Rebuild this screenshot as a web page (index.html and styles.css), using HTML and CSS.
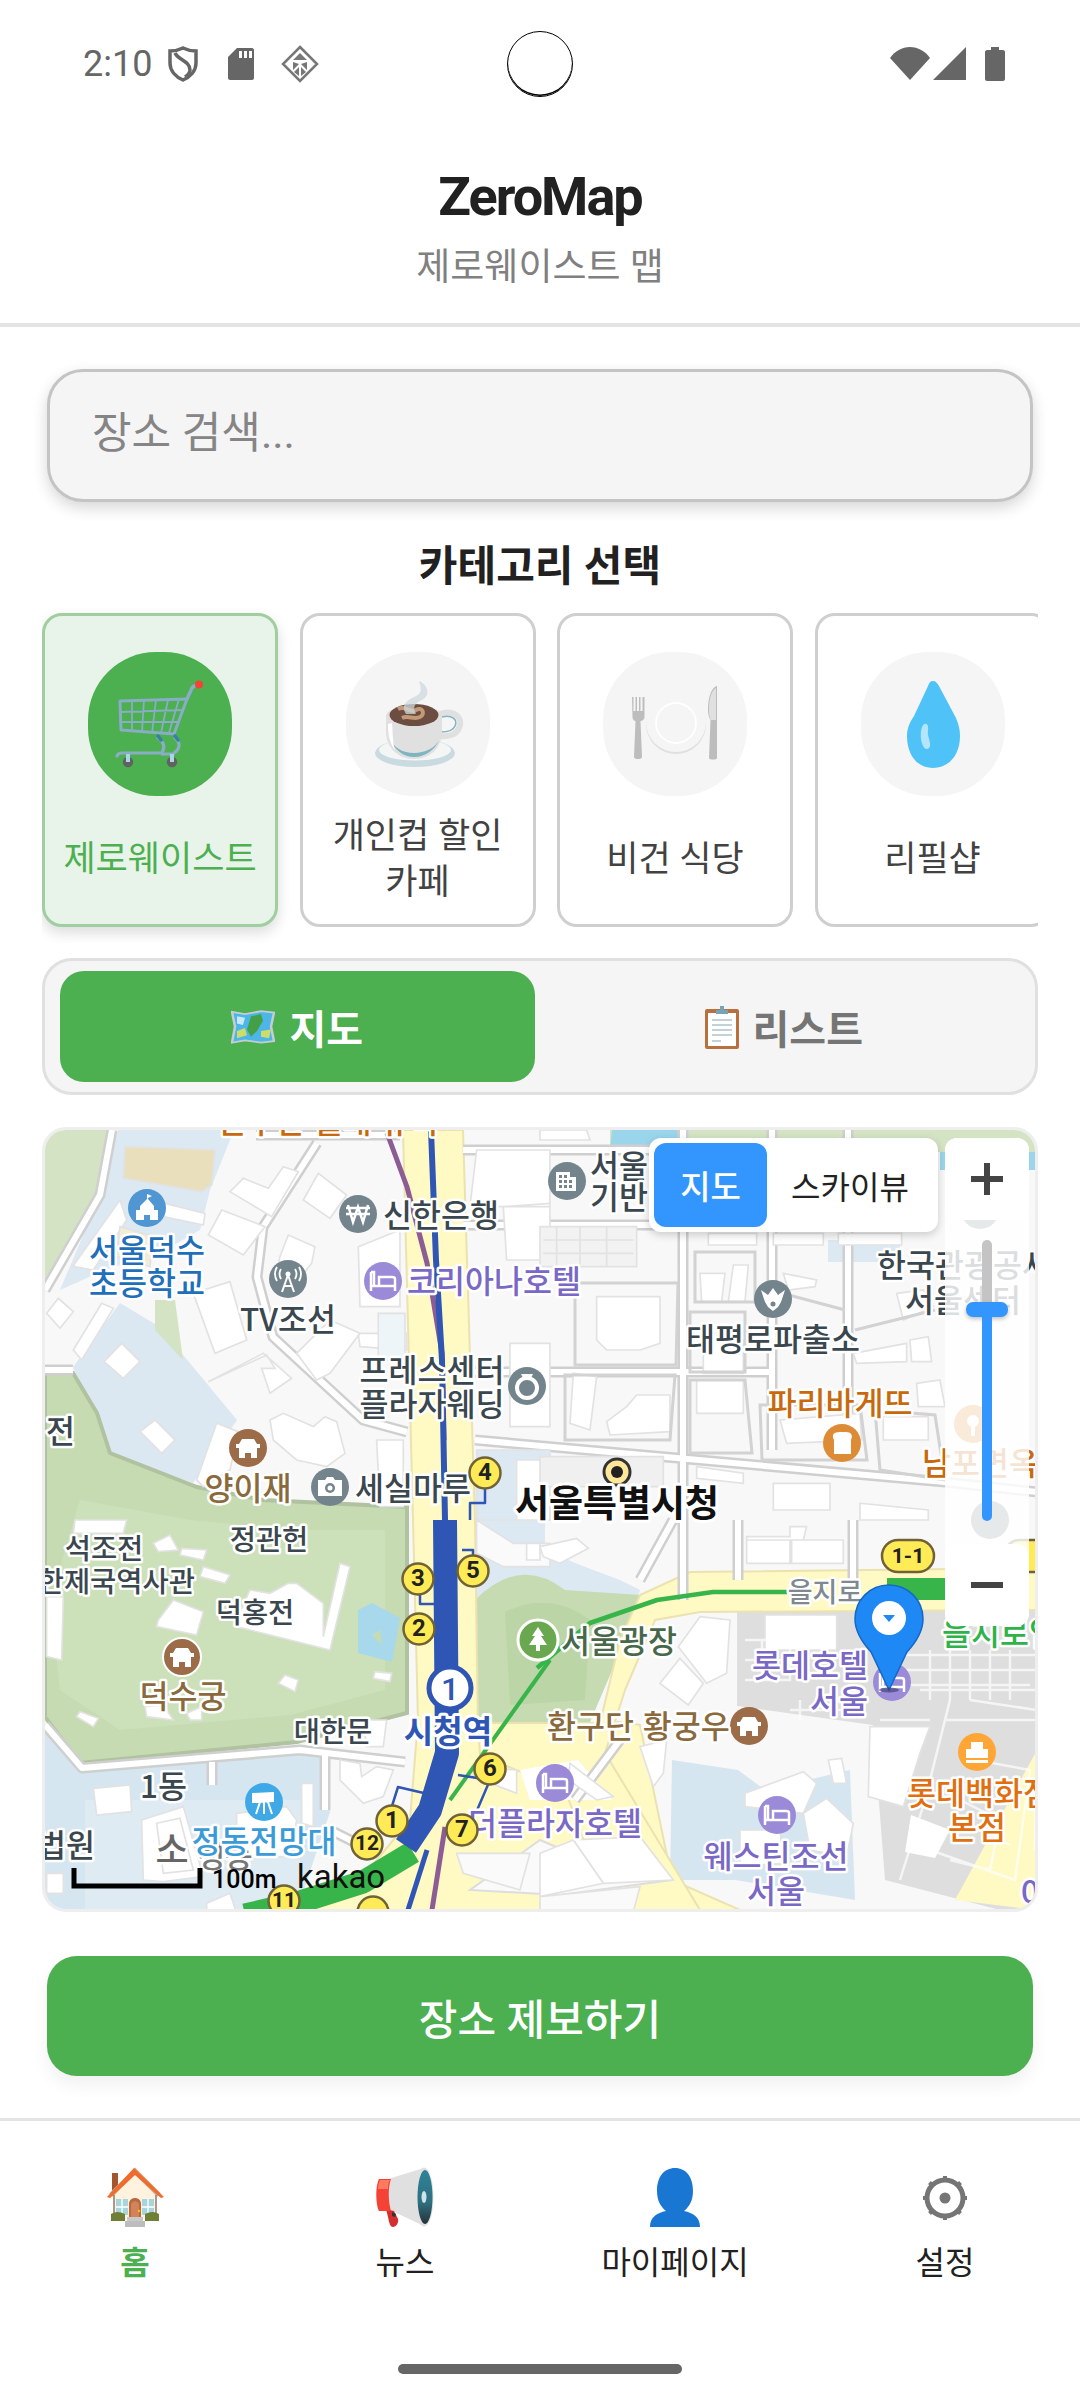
FILE: index.html
```html
<!DOCTYPE html>
<html lang="ko">
<head>
<meta charset="utf-8">
<title>ZeroMap</title>
<link rel="stylesheet" href="styles.css">
</head>
<body>
<div class="app">
  <div class="status">
    <div class="status-left">
      <span class="time">2:10</span>
      <svg class="st-shield" viewBox="0 0 30 36" width="30" height="36"><path d="M15 2C20 4.500 25 5 28 5V17C28 25 22 31 15 34C8 31 2 25 2 17V5C5 5 10 4.500 15 2Z" fill="none" stroke="#666" stroke-width="3.500"/><path d="M7 7C10 14 22 15 22 24C22 27 20 29 17 31" fill="none" stroke="#666" stroke-width="3.500"/></svg>
      <svg class="st-sd" viewBox="0 0 26 32" width="26" height="32"><path d="M9 0H24C25 0 26 1 26 2V30C26 31 25 32 24 32H2C1 32 0 31 0 30V9Z" fill="#666"/><path d="M11 3h3v7h-3zM16 3h3v7h-3zM21 3h3v7h-3z" fill="#fff"/></svg>
      <svg class="st-dia" viewBox="0 0 38 38" width="38" height="38"><path d="M19 2L36 19L19 36L2 19Z" fill="none" stroke="#777" stroke-width="2.500"/><path d="M19 8L26 15H12ZM12 17L18 19L12 25ZM26 17V25L20 19ZM13 27L18 22V31ZM25 27L20 31V22Z" fill="#777"/></svg>
    </div>
    <div class="hole"></div>
    <div class="status-right">
      <svg viewBox="0 0 40 33" width="40" height="33"><path d="M0 11C5 4 12 0 20 0C28 0 35 4 40 11L20 33Z" fill="#666"/></svg>
      <svg viewBox="0 0 33 33" width="33" height="33"><path d="M33 0V33H0Z" fill="#666"/></svg>
      <svg class="st-bat" viewBox="0 0 20 34" width="20" height="34"><path d="M6 0H14V3H18C19 3 20 4 20 5V32C20 33 19 34 18 34H2C1 34 0 33 0 32V5C0 4 1 3 2 3H6Z" fill="#666"/></svg>
    </div>
  </div>

  <header class="header">
    <h1 class="title">ZeroMap</h1>
    <p class="subtitle">제로웨이스트 맵</p>
  </header>

  <input class="search" type="text" placeholder="장소 검색...">

  <h2 class="section-title">카테고리 선택</h2>

  <div class="cats">
    <div class="cat cat-on">
      <div class="cat-icon cat-icon-on">
        <svg viewBox="0 0 96 96" width="96" height="96">
          <g fill="none" stroke="#88adc4" stroke-linecap="round" stroke-linejoin="round">
            <path d="M8 25L75 23L62 58L9 54Z" stroke-width="3"/>
            <path d="M20 25L20 55M32 24L30 56M44 24L40 57M56 24L49 57M67 23L57 57M8 36L71 34M8 46L66 46" stroke-width="1.800"/>
            <path d="M75 23L80 12Q82 9 87 9" stroke-width="3.500"/>
            <path d="M46 62Q55 68 50 77H10Q6 77 5 80M63 62Q72 70 61 78H50" stroke-width="3.200"/>
            <path d="M46 60l3 4M63 60l3 4" stroke="#3b7fa5" stroke-width="3.500"/>
          </g>
          <circle cx="87" cy="8.500" r="4" fill="#f44336"/>
          <circle cx="16" cy="86" r="5.200" fill="#616161"/><circle cx="60" cy="86" r="5.200" fill="#616161"/>
          <path d="M14 78h4v8h-4zM58 78h4v8h-4z" fill="#a7d8e8"/>
        </svg>
      </div>
      <div class="cat-label">제로웨이스트</div>
    </div>
    <div class="cat">
      <div class="cat-icon">
        <svg viewBox="0 0 96 96" width="96" height="96">
          <ellipse cx="45" cy="77" rx="40" ry="14" fill="#c9dbe0"/>
          <ellipse cx="45" cy="74" rx="36" ry="10.500" fill="#f4f6f6"/>
          <path d="M70 38C84 33 94 42 89 52C86 59 78 61 70 60" fill="none" stroke="#e0e0e0" stroke-width="6"/>
          <path d="M72 41C82 38 88 44 85 50C83 55 77 56 71 56" fill="none" stroke="#7fb5c0" stroke-width="1.500"/>
          <path d="M16 40C16 27 72 27 72 40V55C72 72 60 83 44 83C28 83 16 72 16 55Z" fill="#e0e0e0"/>
          <path d="M19 62C24 74 34 81 44 81C55 81 65 74 69 64C65 72 55 77 44 77C33 77 24 72 19 62Z" fill="#7fb5c0"/>
          <path d="M18 48C18 60 20 68 25 74C22 64 23 54 22 47Z" fill="#fff"/>
          <ellipse cx="44" cy="39" rx="24.500" ry="11" fill="#6d4c41"/>
          <path d="M28 33C36 29 40 38 46 34C52 30 56 38 50 41C44 44 38 39 32 42" fill="none" stroke="#c29a76" stroke-width="4"/>
          <path d="M36 38C30 28 38 24 46 20C54 16 50 10 49 5C58 9 62 20 50 25C42 29 44 34 46 38Z" fill="#cfd8dc" opacity=".75"/>
        </svg>
      </div>
      <div class="cat-label">개인컵 할인<br>카페</div>
    </div>
    <div class="cat">
      <div class="cat-icon">
        <svg viewBox="0 0 96 96" width="96" height="96">
          <circle cx="49" cy="48" r="30" fill="#e0e0e0"/>
          <circle cx="49" cy="46" r="30" fill="#f5f5f5"/>
          <circle cx="49" cy="47" r="20" fill="#f5f5f5" stroke="#fff" stroke-width="1.800"/>
          <path d="M5 21h1.500v14h2v-14h1.500v14h2v-14h1.500v14h2v-14h2v20c0 3-3 4-4 4l1.500 36c0 1.500-2 2-4 2s-4-.5-4-2l1.500-36c-1 0-3-1-3-4z" fill="#bdbdbd"/>
          <path d="M90 10V82C90 84 82 84 82 82L83.500 44C82 42 81 38 81 34C81 20 85 11 90 10Z" fill="#bdbdbd"/>
          <path d="M89 12V44H83.500C82 40 82 36 82 32C82 22 85 14 89 12Z" fill="#e0e0e0"/>
        </svg>
      </div>
      <div class="cat-label">비건 식당</div>
    </div>
    <div class="cat">
      <div class="cat-icon">
        <svg viewBox="0 0 96 96" width="96" height="96">
          <path d="M48 5C51 5 52 7 54 10L71 42C74 49 75 54 75 60C75 80 63 92 48 92C33 92 22 80 22 60C22 52 25 46 29 40L43 10C44 7 45 5 48 5Z" fill="#4fc3f7"/>
          <path d="M38 49C41 46 44 49 43 54C42 60 46 66 45 70C44 74 40 74 38 70C35 64 35 54 38 49Z" fill="#b3e5fc"/>
        </svg>
      </div>
      <div class="cat-label">리필샵</div>
    </div>
  </div>

  <div class="toggle">
    <div class="tab tab-on">
      <svg viewBox="0 0 44 48" width="44" height="35" preserveAspectRatio="none"><path d="M1 4L14 7L30 3L43 5L40 24L43 44L30 46L14 43L1 46L4 24Z" fill="#4db6e8" stroke="#c5cdd2" stroke-width="2.500"/><path d="M16 28L20 10L30 7L32 16L26 30L20 38Z" fill="#43a047"/><path d="M6 30L14 26L16 36L6 40ZM30 30L40 28L38 40L30 38Z" fill="#cddc6a"/><path d="M6 10L14 12L12 22L6 20Z" fill="#fff" opacity=".7"/></svg>
      <span>지도</span>
    </div>
    <div class="tab">
      <svg viewBox="0 0 34 44" width="34" height="44"><rect x="0" y="4" width="34" height="40" rx="2" fill="#b9703f"/><rect x="3" y="8" width="28" height="33" fill="#fff"/><path d="M7 15h20M7 20h20M7 25h20M7 30h20M7 36h9" stroke="#b0c4cc" stroke-width="1.600"/><path d="M11 9V5h4V1h4v4h4v4Z" fill="#78a3b5"/></svg>
      <span>리스트</span>
    </div>
  </div>

  <div class="map">
    <svg class="map-svg" viewBox="45 1130 990 779" width="990" height="779">
      <defs>
        <clipPath id="lotte"><path d="M737 1610H1037V1910H737Z"/></clipPath>
      </defs>
      <rect x="45" y="1130" width="990" height="779" fill="#f8f8f8"/>
      <!-- land areas -->
      <path d="M45 1130H107L100 1195L45 1285Z" fill="#d4e3c4"/>
      <path d="M118 1130H234L210 1190L200 1230L165 1250L105 1270L60 1290L100 1195Z" fill="#dce9f2"/>
      <path d="M73 1367L120 1303L160 1327L237 1420L193 1483L110 1453Z" fill="#dce8f1"/>
      <path d="M155 1300L175 1300L183 1360L155 1330Z" fill="#d4e3c4"/>
      <path d="M45 1373H73L97 1413L110 1453L197 1487L263 1500L407 1507V1713L297 1742L80 1763L45 1717Z" fill="#c6dbb2" stroke="#b0c2a0" stroke-width="4"/>
      <path d="M80 1500L190 1520L300 1530L385 1530L385 1690L290 1715L120 1730L60 1690L50 1600Z" fill="#cce0ba"/>
      <path d="M45 1725L82 1770L330 1752V1812L297 1910H45Z" fill="#d6e6f0"/>
      <path d="M85 1800H300V1910H85Z" fill="#e4eef5" opacity=".6"/>
      <path d="M358 1610L372 1603L400 1618L392 1662L358 1653Z" fill="#a8d8ec"/>
      <path d="M372 1635L380 1630L382 1645Z" fill="#c6dbb2"/>
      <path d="M475 1460H545V1550L580 1565L620 1580L640 1590L625 1640L590 1722L478 1725Z" fill="#dce9f2"/>
      <path d="M475 1600Q520 1555 565 1590L640 1595L625 1640L590 1722L478 1725Z" fill="#c6dbb2"/>
      <path d="M505 1612Q550 1590 590 1620L585 1700L510 1705Z" fill="#bcd5a6"/>
      <path d="M610 1130H1037V1152H610Z" fill="#d4e3c4"/>
      <path d="M612 1130H680L676 1150L610 1152Z" fill="#9ad5ec"/>
      <path d="M940 1152H1035V1170H940Z" fill="#9ad5ec"/>
      <path d="M828 1240H900V1262H828Z" fill="#dce9f2"/>
      <path d="M765 1790L850 1770L855 1900L735 1880L670 1880L672 1760L738 1770Z" fill="#d6e6f0"/>
      <path d="M737 1610H1037V1910H1000L885 1880L873 1725L737 1706Z" fill="#dedede"/>
      <!-- yellow roads -->
      <path d="M403 1130H463L475 1520L478 1730L620 1722L640 1725L672 1880L740 1910H297L360 1880L410 1820L418 1720L413 1520Z" fill="#fff9c4" stroke="#ebe2b0" stroke-width="2"/>
      <path d="M478 1723H600L620 1640L640 1595L690 1572L1037 1568V1610L700 1612L655 1620L625 1690L605 1753L700 1910H610L565 1790L480 1755Z" fill="#fff9c4" stroke="#ebe2b0" stroke-width="2"/>
      <path d="M955 1900L1037 1750V1910Z" fill="#fff9c4"/>
      <path d="M540 1840L610 1870L672 1880L560 1895L470 1890Z" fill="#fafafa" stroke="#ddd" stroke-width="2"/>
      <path d="M520 1770L578 1760L612 1800L530 1800Z" fill="#fff"/>

      <!-- roads with casing -->
      <g fill="none" stroke-linejoin="round">
        <g stroke="#cfcfcf" stroke-width="11">
          <path d="M45 1290L100 1195L112 1130M317 1143L263 1227L257 1277L273 1337L363 1420L407 1432M45 1370H73M256 1135H400M463 1150H683M683 1130V1600M463 1225H683M475 1372H772M475 1440L945 1482L1037 1492M772 1130V1450M848 1130V1450M738 1520V1580M853 1520V1580M673 1520L640 1580"/>
          <path d="M45 1725L82 1768L300 1750L405 1762M325 1755V1810M212 1762V1785M330 1830L360 1845M575 1800L620 1740"/>
        </g>
        <g stroke="#fff" stroke-width="6">
          <path d="M45 1290L100 1195L112 1130M317 1143L263 1227L257 1277L273 1337L363 1420L407 1432M45 1370H73M256 1135H400M463 1150H683M683 1130V1600M463 1225H683M475 1372H772M475 1440L945 1482L1037 1492M772 1130V1450M848 1130V1450M738 1520V1580M853 1520V1580M673 1520L640 1580"/>
          <path d="M45 1725L82 1768L300 1750L405 1762M325 1755V1810M212 1762V1785M330 1830L360 1845M575 1800L620 1740"/>
        </g>
      </g>

      <!-- upper-left details, coordinates of the crop -->
      <g transform="translate(30 1120) scale(.3333)" class="bld">
        <path d="M285 80L555 90L545 195L515 215L280 175Z" fill="#e9dfbd" stroke="#dcb8a2"/>
        <path d="M600 215L640 175L715 205L760 140L805 155L725 290Z"/>
        <path d="M535 345L575 270L705 320L640 405Z"/>
        <path d="M820 240L865 160L950 225L900 295Z"/>
        <path d="M750 410L775 345L855 380L845 430L780 510L735 480Z"/>
        <path d="M490 520L600 485L650 660L555 700Z"/>
        <path d="M50 580L85 535L130 575L90 625Z"/>
        <path d="M130 690L215 550L250 565L155 720Z"/>
        <path d="M222 725L275 670L330 725L280 775Z"/>
        <path d="M330 935L375 900L435 960L395 1000Z"/>
        <path d="M535 785L710 705L735 745L695 745L720 820L785 775L700 700Z"/>
        <path d="M720 900L760 880L850 920L885 890L920 905L945 1000L890 1040L800 1020L730 960Z"/>
        <path d="M405 250L525 280L520 315L400 290Z"/>
        <path d="M135 430L270 240L290 300L190 450L130 440Z"/>
        <path d="M270 320L370 350L360 440L260 410Z" fill="#f3ecd7"/>
        <path d="M500 1080L560 910L625 935L600 1050L520 1100Z"/>
        <path d="M985 640H1130V690L990 680Z"/>
        <path d="M1045 580H1125V720H1045Z" fill="#eef5f9"/>
        <path d="M1040 960H1120V1160H1050Z"/>
        <path d="M800 700L900 600L990 640L900 760L860 780Z"/>
        <path d="M985 380L1110 330V560L990 560Z"/>
        <path d="M1340 90H1560V260H1320ZM1420 260L1560 250V420H1430Z"/>
        <path d="M1440 670H1560V920H1440Z"/>
        <path d="M1340 990H1560V1200H1340Z" fill="#dce9f2"/>
        <path d="M1460 1020H1560V1200H1460Z"/>
      </g>

      <!-- upper-right blocks -->
      <g transform="translate(540 1120) scale(.3333)" class="bld">
        <path d="M170 530H360V670L300 690H200L170 660Z"/>
        <path d="M480 460H555L545 545H485ZM580 435H625L615 545H565Z"/>
        <path d="M730 460L830 480L825 500L745 510Z"/>
        <path d="M1070 520L1150 510L1180 560L1090 600Z"/>
        <path d="M470 780H610V880H470Z"/>
        <path d="M100 760L170 770L150 930L90 910Z"/>
        <path d="M260 860L290 825H390V935L210 945L200 905Z"/>
        <path d="M720 900L960 880L965 960L740 970Z"/>
        <path d="M1030 890H1165V960H1030Z"/>
        <path d="M700 1090H870V1170H700Z"/>
        <path d="M1130 790L1200 780L1215 860H1135Z"/>
        <path d="M940 700L1100 670V725L950 730Z"/>
        <path d="M1110 660L1165 650L1175 725H1115Z"/>
        <path d="M470 1040L610 1060V1090L470 1075Z"/>
        <path d="M960 1150L1165 1170V1200H960Z"/>
        <path d="M0 30H140L150 60H0Z"/>
        <path d="M490 660H610V760H490Z"/>
        <path d="M0 320H290V440H0Z" fill="#f2f2f2"/>
        <path d="M505 340H650V375H505ZM700 340H850V375H700ZM895 340H1085V375H895Z"/>
        <path d="M0 1010H370V1100H0Z" fill="#f0f0f0"/>
        <path d="M10 360H280M10 400H280M50 320V440M120 320V440M200 320V440" fill="none"/>
      </g>
      <g fill="none" stroke="#d2d2d2" stroke-width="3">
        <path d="M575 1283H678L676 1365H575ZM565 1375H675L670 1440H565ZM690 1312H745V1372H690ZM690 1380H745L752 1453H690ZM760 1405H860L867 1460H762ZM875 1410L935 1415L945 1480L880 1470Z"/>
        <path d="M695 1252H755V1302H695ZM770 1290L845 1310M855 1330L935 1310"/>
        <path d="M880 1180V1230"/>
      </g>

      <!-- lower-left details -->
      <g transform="translate(30 1520) scale(.3333)" class="bld">
        <path d="M135 0H290L280 40H130Z"/>
        <path d="M370 70L420 45L445 90L385 95ZM455 85L530 90L520 120L450 105Z"/>
        <path d="M520 140L600 165L585 190L510 170Z"/>
        <path d="M385 300L430 240L520 275L500 345L380 320Z"/>
        <path d="M620 300L660 210L720 220L775 190L800 190L880 250L880 350L930 130L960 140L900 390L620 320Z"/>
        <path d="M745 490L765 465L805 480L795 515Z"/>
        <path d="M1035 455L1085 460L1080 485L1030 475Z"/>
        <path d="M140 590L150 575L205 595L190 620Z"/>
        <path d="M345 560L400 555L430 600L350 590ZM470 580L515 560L515 600L480 600Z"/>
        <path d="M1000 600H1070L1060 680H1010Z"/>
        <path d="M50 230H100L95 420L50 410Z"/>
        <path d="M190 805L300 795L305 875L200 885Z"/>
        <path d="M335 900L460 860L520 1070L400 1085L340 1080Z"/>
        <path d="M380 910L450 895L490 1050L400 1060Z"/>
        <path d="M620 880L770 860L800 900L780 1010L620 1010Z"/>
        <path d="M815 790H850V920L815 910Z"/>
        <path d="M930 720L990 730L995 770L1040 740L1090 750L1060 830L1000 850L930 780Z"/>
        <path d="M1330 740L1460 750V820L1330 770Z"/>
        <path d="M1280 1000L1500 1000L1470 1110L1300 1060Z" fill="#fafafa"/>
        <path d="M1340 0L1450 70L1560 70V140H1420L1340 100Z" fill="#fafafa"/>
        <path d="M1490 70H1530V120H1490Z"/>
        <path d="M50 1060H100V1120H50Z"/>
        <path d="M530 1150L600 1120L620 1180H530Z"/>
      </g>

      <!-- lower-right details -->
      <g transform="translate(540 1520) scale(.3333)" class="bld">
        <path d="M0 80L110 55L145 85L60 130L10 110Z"/>
        <path d="M620 50H750V20H800L790 60H620ZM755 60H910V130H755ZM620 60H750V130H620Z"/>
        <path d="M415 380L480 290L570 300L560 460L500 490Z"/>
        <path d="M360 490L420 415L490 490L445 555Z"/>
        <path d="M300 680L380 660L370 760L340 800Z"/>
        <path d="M675 285H890V390H675Z"/>
        <path d="M990 620H1170L1140 700L1090 860L985 830Z"/>
        <path d="M615 820L790 755L830 790L790 880L615 860Z"/>
        <path d="M790 880L860 835L940 910L920 1010L810 990Z"/>
        <path d="M600 930H720L730 1030L600 1040Z"/>
        <path d="M865 720L905 715L920 790L880 790Z"/>
        <path d="M90 730L220 830L170 840L85 780Z"/>
        <path d="M100 960L300 950L400 1080L190 1090Z"/>
        <path d="M0 1000L100 960L190 1090L0 1130Z"/>
        <path d="M0 1130L300 1100L280 1175H0Z" fill="#fafafa"/>
      </g>
      <!-- busy Lotte rooftops -->
      <g clip-path="url(#lotte)" fill="none" stroke="#fff" stroke-width="2.500" opacity=".7">
        <path d="M905 1655H1037M905 1670H1037M920 1690H1037M905 1685H1030M930 1650V1700M950 1650V1700M970 1650V1700M990 1650V1700M1010 1650V1700"/>
        <path d="M950 1700L925 1800L900 1880M970 1700L1037 1710M945 1720H1037L1035 1850M975 1760L1030 1770L1015 1880L930 1850M960 1800L1000 1820L990 1870L950 1860M980 1830L1010 1845"/>
        <path d="M745 1640H790V1680H745M762 1640V1680M745 1660H790"/>
        <path d="M790 1710H860M800 1700V1720M880 1720H930"/>
      </g>
      <path d="M911 1815L950 1830L935 1858L905 1852Z" fill="#fff"/>

      <!-- transit lines -->
      <g fill="none" stroke-linecap="butt" stroke-linejoin="round">
        <path d="M387 1133L407 1187L427 1263L442 1353L444 1440" stroke="#8e5c95" stroke-width="5"/>
        <path d="M445 1827L432 1910" stroke="#8e5c95" stroke-width="5"/>
        <path d="M431 1130L436 1260L442 1360L445 1520" stroke="#2f55b5" stroke-width="6"/>
        <path d="M427 1850L408 1910" stroke="#2f55b5" stroke-width="5"/>
        <path d="M550 1660L450 1800" stroke="#38b54a" stroke-width="4"/>
        <path d="M537 1668L590 1623L657 1600L713 1592L787 1592" stroke="#38b54a" stroke-width="4.500"/>
        <path d="M413 1852L363 1882L297 1903L245 1915" stroke="#38b54a" stroke-width="23"/>
        <path d="M445 1520L447 1753L430 1810L406 1846" stroke="#2f55b5" stroke-width="24"/>
        <path d="M887 1589H950" stroke="#38b54a" stroke-width="22"/>
        <path d="M485 1488V1503H470V1520M473 1556V1550H462M420 1594V1604H438M423 1604L435 1604M392 1806L398 1787L428 1794M458 1775L490 1780L475 1815" stroke="#2f55b5" stroke-width="2.500"/>
      </g>

      <!-- POIs -->
      <g class="poi">
        <g transform="translate(147 1208)"><circle r="19" fill="#4f96d3"/><path d="M-11 12V2H-7V-2L0 -9V-14L5 -12L1 -10V-9L7 -2V2H11V12H3V7H-3V12Z" fill="#fff"/></g>
        <g transform="translate(358 1214)"><circle r="19" fill="#74848c"/><path d="M-12 -6H12M-12 0H12M-10 -9L-5 8L0 -7L5 8L10 -9" fill="none" stroke="#fff" stroke-width="2.500"/></g>
        <g transform="translate(288 1279)"><circle r="19" fill="#74848c"/><path d="M0 -4L-6 13M0 -4L6 13M-4 7H4" fill="none" stroke="#fff" stroke-width="2"/><circle cy="-5" r="2.500" fill="#fff"/><path d="M-7 -10Q-10 -5 -7 0M7 -10Q10 -5 7 0M-11 -12Q-15 -5 -11 2M11 -12Q15 -5 11 2" fill="none" stroke="#fff" stroke-width="1.800"/></g>
        <g transform="translate(383 1281)"><circle r="19" fill="#9a8ad8"/><path d="M-12 -9V10M-12 5H12V10M12 5V-2Q12 -4 9 -4H-4V5M-12 -9H-9V5" fill="none" stroke="#fff" stroke-width="2.500"/></g>
        <g transform="translate(527 1386)"><circle r="19" fill="#74848c"/><circle cy="2" r="10" fill="none" stroke="#fff" stroke-width="4"/><path d="M-6 -12H6L3 -6H-3Z" fill="#fff"/></g>
        <g transform="translate(248 1448)"><circle r="19" fill="#9c6b47"/><path d="M-6 -9H6L9 -4H12V0H9V10H3V5H-3V10H-9V0H-12V-4H-9Z" fill="#fff"/></g>
        <g transform="translate(330 1487)"><circle r="19" fill="#74848c"/><path d="M-12 -7H-5L-3 -10H3L5 -7H12V9H-12Z" fill="#fff"/><circle cy="1" r="5" fill="#74848c"/><circle cy="1" r="2.500" fill="#fff"/></g>
        <g transform="translate(567 1181)"><circle r="19" fill="#74848c"/><path d="M-11 -9H3V-4H9V10H-11Z" fill="#fff"/><path d="M-8 -6h3v3h-3zM-3 -6h3v3h-3zM-8 -1h3v3h-3zM-3 -1h3v3h-3zM2 -1h3v3h-3zM-8 4h3v3h-3zM-3 4h3v3h-3zM2 4h3v3h-3z" fill="#74848c"/></g>
        <g transform="translate(773 1299)"><circle r="19" fill="#74848c"/><path d="M-12 -9L-5 -4L0 -11L5 -4L12 -9L8 3L5 8L0 12L-5 8L-8 3Z" fill="#fff"/><circle cy="5" r="2.500" fill="#74848c"/></g>
        <g transform="translate(842 1443)"><circle r="19" fill="#de8b35"/><path d="M-8 11V-3Q-12 -11 -2 -11H4Q12 -11 9 -3V11Z" fill="#fff"/></g>
        <g transform="translate(980 1210)"><circle r="19" fill="#74848c"/></g>
        <g transform="translate(973 1424)"><circle r="19" fill="#de8b35"/><circle cy="-3" r="6" fill="#fff"/><path d="M-2 -2h4v14h-4z" fill="#fff"/></g>
        <g transform="translate(990 1520)"><circle r="19" fill="#74848c"/></g>
        <g transform="translate(182 1657)"><circle r="19" fill="#9c6b47" stroke="#fff" stroke-width="2"/><path d="M-6 -9H6L9 -4H12V0H9V10H3V5H-3V10H-9V0H-12V-4H-9Z" fill="#fff"/></g>
        <g transform="translate(264 1802)"><circle r="19" fill="#3fa9e8"/><path d="M-11 -8L9 -9V-1L-11 0ZM-4 0L-8 12M4 0L8 12M0 0V12" fill="#fff" stroke="#fff" stroke-width="2"/></g>
        <g transform="translate(538 1640)"><circle r="20" fill="#6aa84f" stroke="#fff" stroke-width="3"/><path d="M0 -13L6 -4H3L9 5H2V11H-2V5H-9L-3 -4H-6Z" fill="#fff"/></g>
        <g transform="translate(749 1726)"><circle r="19" fill="#9c6b47"/><path d="M-6 -9H6L9 -4H12V0H9V10H3V5H-3V10H-9V0H-12V-4H-9Z" fill="#fff"/></g>
        <g transform="translate(555 1783)"><circle r="19" fill="#9a8ad8"/><path d="M-12 -9V10M-12 5H12V10M12 5V-2Q12 -4 9 -4H-4V5M-12 -9H-9V5" fill="none" stroke="#fff" stroke-width="2.500"/></g>
        <g transform="translate(777 1815)"><circle r="19" fill="#9a8ad8"/><path d="M-12 -9V10M-12 5H12V10M12 5V-2Q12 -4 9 -4H-4V5M-12 -9H-9V5" fill="none" stroke="#fff" stroke-width="2.500"/></g>
        <g transform="translate(892 1682)"><circle r="19" fill="#9a8ad8"/><path d="M-12 -9V10M-12 5H12V10M12 5V-2Q12 -4 9 -4H-4V5M-12 -9H-9V5" fill="none" stroke="#fff" stroke-width="2.500"/></g>
        <g transform="translate(977 1752)"><circle r="19" fill="#ffa636"/><path d="M-11 -3H11V6H-11ZM-11 8H11V11H-11ZM-5 -3V-9H5V-3" fill="#fff"/><path d="M-5 -3V-9H5V-3" fill="none" stroke="#fff" stroke-width="2"/></g>
        <g transform="translate(617 1472)"><circle r="13" fill="#ffe699" stroke="#333" stroke-width="3"/><circle r="6" fill="#222"/></g>
      </g>

      <!-- labels -->
      <g class="lbl">
        <text class="l-orange" x="328" y="1133" text-anchor="middle">환구단 월대 유적</text>
        <text class="l-blue" x="147" y="1262" text-anchor="middle">서울덕수</text>
        <text class="l-blue" x="147" y="1295" text-anchor="middle">초등학교</text>
        <text class="l-dark" x="383" y="1227">신한은행</text>
        <text class="l-purple" x="407" y="1293">코리아나호텔</text>
        <text class="l-dark" x="288" y="1331" text-anchor="middle">TV조선</text>
        <text class="l-dark" x="432" y="1382" text-anchor="middle">프레스센터</text>
        <text class="l-dark" x="432" y="1416" text-anchor="middle">플라자웨딩</text>
        <text class="l-dark" x="46" y="1443">전</text>
        <text class="l-brown" x="248" y="1500" text-anchor="middle">양이재</text>
        <text class="l-dark" x="355" y="1500">세실마루</text>
        <text class="l-dark" x="619" y="1178" text-anchor="middle">서울</text>
        <text class="l-dark" x="619" y="1209" text-anchor="middle">기반</text>
        <text class="l-dark" x="877" y="1277">한국관광공사</text>
        <text class="l-dark" x="905" y="1312">서울센터</text>
        <text class="l-dark" x="773" y="1351" text-anchor="middle">태평로파출소</text>
        <text class="l-orange" x="840" y="1415" text-anchor="middle">파리바게뜨</text>
        <text class="l-orange" x="922" y="1475">남포면옥</text>
        <text class="l-big" x="617" y="1517" text-anchor="middle">서울특별시청</text>
        <text class="l-dark l-sm" x="104" y="1559" text-anchor="middle">석조전</text>
        <text class="l-dark l-sm" x="269" y="1550" text-anchor="middle">정관헌</text>
        <text class="l-dark l-sm" x="195" y="1592" text-anchor="end">대한제국역사관</text>
        <text class="l-dark l-sm" x="255" y="1623" text-anchor="middle">덕홍전</text>
        <text class="l-brown" x="183" y="1708" text-anchor="middle">덕수궁</text>
        <text class="l-dark l-sm" x="333" y="1742" text-anchor="middle">대한문</text>
        <text class="l-station" x="448" y="1743" text-anchor="middle">시청역</text>
        <text class="l-dark" x="140" y="1798">1동</text>
        <text class="l-dark" x="95" y="1857" text-anchor="end">법원</text>
        <text class="l-grey" x="172" y="1863" text-anchor="middle">소</text>
        <text class="l-grey2" x="225" y="1867" text-anchor="middle">정동</text>
        <text class="l-sky" x="264" y="1853" text-anchor="middle">정동전망대</text>
        <text class="l-road" x="825" y="1602" text-anchor="middle">을지로</text>
        <text class="l-green" x="942" y="1645">을지로입구</text>
        <text class="l-park" x="561" y="1653">서울광장</text>
        <text class="l-purple" x="868" y="1677" text-anchor="end">롯데호텔</text>
        <text class="l-purple" x="868" y="1713" text-anchor="end">서울</text>
        <text class="l-brown" x="547" y="1738">환구단 황궁우</text>
        <text class="l-purple" x="468" y="1835">더플라자호텔</text>
        <text class="l-purple" x="776" y="1868" text-anchor="middle">웨스틴조선</text>
        <text class="l-purple" x="776" y="1903" text-anchor="middle">서울</text>
        <text class="l-orange2" x="907" y="1805">롯데백화점</text>
        <text class="l-orange2" x="977" y="1839" text-anchor="middle">본점</text>
        <text class="l-purple" x="1021" y="1903">0</text>
      </g>

      <!-- exits -->
      <g class="exit">
        <g transform="translate(485 1473)"><circle r="15.500"/><text y="7">4</text></g>
        <g transform="translate(473 1571)"><circle r="15.500"/><text y="7">5</text></g>
        <g transform="translate(418 1579)"><circle r="15.500"/><text y="7">3</text></g>
        <g transform="translate(419 1629)"><circle r="15.500"/><text y="7">2</text></g>
        <g transform="translate(490 1769)"><circle r="15.500"/><text y="7">6</text></g>
        <g transform="translate(462 1830)"><circle r="15.500"/><text y="7">7</text></g>
        <g transform="translate(392 1821)"><circle r="15.500"/><text y="7">1</text></g>
        <g transform="translate(367 1844)"><circle r="15.500"/><text y="6" class="exit-sm">12</text></g>
        <g transform="translate(284 1901)"><circle r="15.500"/><text y="6" class="exit-sm">11</text></g>
        <g transform="translate(373 1912)"><circle r="15.500"/></g>
        <g transform="translate(908 1556)"><rect x="-26" y="-16" width="52" height="32" rx="16"/><text y="7" class="exit-sm">1-1</text></g>
        <g transform="translate(1030 1556)"><rect x="-26" y="-16" width="52" height="32" rx="16"/></g>
      </g>
      <circle class="st-ring" cx="450" cy="1688" r="21"/>
      <text class="st-num" x="450" y="1700">1</text>

      <!-- scale and logo -->
      <path d="M74 1868V1886H200V1868" fill="none" stroke="#000" stroke-width="5"/>
      <text class="scale" x="212" y="1888">100m</text>
      <text class="kakao" x="297" y="1888">kakao</text>

      <!-- marker -->
      <path d="M889 1690L871 1652C860 1640 855 1630 855 1619C855 1600 870 1585 889 1585C908 1585 923 1600 923 1619C923 1630 918 1640 907 1652Z" fill="#1e88f5" stroke="#1668c4" stroke-width="1.500"/>
      <ellipse cx="889" cy="1690" rx="10" ry="2.500" fill="#3a3a6a" opacity=".6"/>
      <circle cx="889" cy="1618" r="17" fill="#fff"/>
      <path d="M883 1615H895L889 1622Z" fill="#1e88f5"/>
    </svg>

    <div class="seg">
      <div class="seg-btn seg-on">지도</div>
      <div class="seg-btn">스카이뷰</div>
    </div>

    <div class="zoom">
      <div class="zoom-btn"><svg viewBox="0 0 32 32" width="32" height="32"><path d="M0 16H32M16 0V32" stroke="#444" stroke-width="6"/></svg></div>
      <div class="slider">
        <div class="track-grey"></div>
        <div class="thumb"></div>
        <div class="track-blue"></div>
      </div>
      <div class="zoom-btn"><svg viewBox="0 0 32 8" width="32" height="8"><path d="M0 4H32" stroke="#444" stroke-width="6"/></svg></div>
    </div>
  </div>

  <button class="report" type="button">장소 제보하기</button>

  <nav class="nav">
    <div class="nav-item nav-on">
      <svg viewBox="0 0 60 60" width="60" height="60">
        <path d="M7 6h6v22h-6z" fill="#a5552d"/>
        <path d="M9 27L30 6L51 27V52H9Z" fill="#fff3e0"/>
        <path d="M6 28L30 4L54 28" fill="none" stroke="#c4ae92" stroke-width="5"/>
        <path d="M2 30L29 1L59 30L56 31L30 8L5 31Z" fill="#f26b2c"/>
        <path d="M9 28V50M51 28V50" stroke="#8d7a6a" stroke-width="1.500"/>
        <path d="M11 32h12v16H11zM37 32h12v16H37z" fill="#a8d4dc"/>
        <path d="M17 32v16M11 40h12M43 32v16M37 40h12" stroke="#fff" stroke-width="1.300"/>
        <path d="M24 53V37C24 29 36 29 36 37V53Z" fill="#b9683f"/>
        <path d="M26 52V38C26 33 34 33 34 38V52Z" fill="#d2835a"/>
        <circle cx="34" cy="44" r="1.200" fill="#ffc107"/>
        <path d="M6 47Q12 43 20 47V54H6ZM40 47Q48 43 54 47V54H40Z" fill="#6f7f36"/>
        <path d="M20 54H40V60H20Z" fill="#bdbdbd"/>
        <path d="M22 50H38V54H22Z" fill="#c9c9c9"/>
      </svg>
      <span>홈</span>
    </div>
    <div class="nav-item">
      <svg viewBox="0 0 60 60" width="60" height="60">
        <defs><linearGradient id="bell" x1="0" y1="0" x2="0" y2="1"><stop offset="0" stop-color="#2e8398"/><stop offset=".6" stop-color="#2f6f80"/><stop offset="1" stop-color="#263238"/></linearGradient></defs>
        <path d="M13 12L49 1V59L13 42Z" fill="#e0e0e0"/>
        <ellipse cx="49" cy="30" rx="9.500" ry="29.500" fill="#e0e0e0"/>
        <ellipse cx="50" cy="30" rx="7.500" ry="27" fill="url(#bell)"/>
        <ellipse cx="49" cy="30" rx="2.500" ry="6" fill="#cfe3ea"/>
        <path d="M11 42L19 44L23 52C24 56 21 60 18 60C15 60 14 55 13 50Z" fill="#d32f2f"/>
        <path d="M4 12H16C13 20 13 34 16 44H4C1 38 0 20 4 12Z" fill="#f44336"/>
        <path d="M5 13H15C13 16 13 19 13 22H3C3 18 4 15 5 13Z" fill="#ff7a5f"/>
        <path d="M17 45L21 47L20 50L17 49Z" fill="#333"/>
      </svg>
      <span>뉴스</span>
    </div>
    <div class="nav-item">
      <svg viewBox="0 0 60 60" width="60" height="60">
        <path d="M30 1C41 1 48 10 48 24C48 34 44 40 39 44C48 46 55 50 55 60H5C5 50 12 46 21 44C16 40 12 34 12 24C12 10 19 1 30 1Z" fill="#1976d2"/>
      </svg>
      <span>마이페이지</span>
    </div>
    <div class="nav-item">
      <svg viewBox="0 0 60 60" width="60" height="60">
        <circle cx="30" cy="31" r="18" fill="none" stroke="#757575" stroke-width="5"/>
        <circle cx="30" cy="31" r="5.500" fill="#757575"/>
        <path d="M30 9V14M30 48V53M8 31H13M47 31H52M14.500 15.500L18 19M42 43L45.500 46.500M45.500 15.500L42 19M18 43L14.500 46.500" stroke="#757575" stroke-width="4"/>
      </svg>
      <span>설정</span>
    </div>
  </nav>

  <div class="home-bar"></div>
</div>
</body>
</html>
```
FILE: styles.css
```css
* { box-sizing: border-box; }
html, body { margin: 0; padding: 0; background: #fff; }
body { font-family: Roboto, "Noto Sans CJK KR", sans-serif; color: #212121; }
.app { width: 1080px; height: 2400px; overflow: hidden; display: flex; flex-direction: column; }

/* status bar */
.status { height: 100px; padding: 27px 75px 0 83px; display: flex; align-items: center; justify-content: space-between; position: relative; flex: none; }
.status-left { display: flex; align-items: center; }
.time { font-size: 36px; color: #666; letter-spacing: 0; width: 85px; }
.st-sd { margin-left: 30px; }
.st-dia { margin-left: 27px; }
.status-right { display: flex; align-items: center; gap: 3px; }
.st-bat { margin-left: 16px; }
.hole { position: absolute; left: 507px; top: 31px; width: 66px; height: 66px; border-radius: 50%; border: 1.500px solid #000; box-shadow: inset 0 -1.500px 0 #000; background: #fff; }

/* header */
.header { flex: none; height: 227px; padding-top: 62px; border-bottom: 4px solid #e4e4e4; text-align: center; }
.title { margin: 0; font-size: 54px; line-height: 70px; font-weight: 700; letter-spacing: -2px; color: #212121; }
.subtitle { margin: 12px 0 0; font-size: 37px; line-height: 48px; color: #808080; }

/* search */
.search { flex: none; display: block; width: 986px; height: 133px; margin: 42px 47px 0; padding: 0 42px 6px; border: 3px solid #c4c4c4; border-radius: 36px; background: #f5f5f5; font-family: Roboto, "Noto Sans CJK KR", sans-serif; font-size: 43px; color: #212121; box-shadow: 0 6px 15px rgba(0,0,0,.16); outline: none; }
.search::placeholder { color: #858585; opacity: 1; }

.section-title { flex: none; margin: 37px 0 0; text-align: center; font-size: 42px; line-height: 56px; font-weight: 700; color: #212121; }

/* categories */
.cats { flex: none; display: flex; gap: 21.500px; width: 996px; margin: 11px 42px 0; padding: 7px 0 16px 0; overflow: hidden; }
.cat { flex: none; width: 236px; height: 314px; padding-top: 36px; border: 3px solid #cfcfcf; border-radius: 20px; background: #fff; display: flex; flex-direction: column; align-items: center; }
.cat-on { background: #e8f4e9; border-color: #9fce9f; box-shadow: 0 6px 14px rgba(0,0,0,.14); }
.cat-icon { flex: none; width: 144px; height: 144px; border-radius: 68px; background: #f5f5f5; display: flex; align-items: center; justify-content: center; }
.cat-icon-on { background: #4caf50; }
.cat-label { margin-top: 16px; height: 96px; display: flex; align-items: center; text-align: center; font-size: 35px; line-height: 46px; color: #424242; }
.cat-on .cat-label { color: #4caf50; }

/* list/map toggle */
.toggle { flex: none; display: flex; gap: 12px; width: 996px; height: 137px; margin: 15px 42px 0; padding: 10px 14px 10px 15px; border: 3px solid #e0e0e0; border-radius: 30px; background: #f5f5f5; }
.tab { flex: 1; border-radius: 24px; display: flex; align-items: center; justify-content: center; gap: 14px; font-size: 40px; font-weight: 700; color: #757575; }
.tab-on { background: #4caf50; color: #fff; }

/* map */
.map { flex: none; position: relative; width: 996px; height: 785px; margin: 32px 42px 0; border: 3px solid #eeeeee; border-radius: 24px; overflow: hidden; }
.map-svg { display: block; font-family: "Noto Sans CJK KR", Roboto, sans-serif; }
.bld path { stroke: #e2e2e2; stroke-width: 5; }
.bld path:not([fill]) { fill: #fff; }
.lbl text { font-size: 31.500px; font-weight: 500; paint-order: stroke; stroke: #fff; stroke-width: 5px; stroke-linejoin: round; }
.lbl .l-sm { font-size: 28.500px; }
.l-dark { fill: #3b474f; }
.l-blue { fill: #1f6fbb; }
.l-purple { fill: #7a68c6; }
.l-brown { fill: #8a6a3c; }
.l-orange { fill: #c8690e; }
.l-orange2 { fill: #e06f10; }
.l-green { fill: #2eb34a; }
.l-park { fill: #47684a; }
.l-sky { fill: #3a9bd8; }
.l-road { fill: #808890; }
.lbl .l-road { font-size: 27px; }
.lbl .l-big { fill: #111; font-size: 37px; font-weight: 700; stroke-width: 6px; }
.lbl .l-station { fill: #2f55b5; font-size: 32px; font-weight: 700; stroke-width: 6px; }
.lbl .l-grey { fill: #666; font-size: 36px; }
.lbl .l-grey2 { fill: #777; font-size: 30px; }
.exit circle, .exit rect { fill: #ffeb55; stroke: #6f6138; stroke-width: 2.500; }
.exit text { font-size: 24px; font-weight: 700; fill: #222; text-anchor: middle; font-family: Roboto, sans-serif; }
.exit .exit-sm { font-size: 21px; }
.st-ring { fill: #fff; stroke: #2f55b5; stroke-width: 5; }
.st-num { font-family: Roboto, sans-serif; font-size: 32px; font-weight: 500; fill: #2f55b5; text-anchor: middle; }
.scale { font-family: Roboto, sans-serif; font-size: 25px; font-weight: 500; fill: #000; }
.kakao { font-family: Roboto, sans-serif; font-size: 33px; font-weight: 400; fill: #111; }

.seg { position: absolute; left: 604px; top: 8px; width: 289px; height: 94px; padding: 5px; display: flex; align-items: stretch; background: #fff; border-radius: 12px; box-shadow: 0 3px 8px rgba(0,0,0,.18); }
.seg-btn { display: flex; align-items: center; justify-content: center; font-size: 32px; font-weight: 400; color: #222; flex: 1; font-family: "Noto Sans CJK KR", sans-serif; }
.seg-on { flex: none; width: 113px; background: #3396ff; color: #fff; border-radius: 12px; font-weight: 500; font-size: 33px; }

.zoom { position: absolute; left: 900px; top: 8px; width: 84px; height: 488px; display: flex; flex-direction: column; background: rgba(255,255,255,.82); border-radius: 12px; }
.zoom-btn { flex: none; height: 82px; background: #fff; border-radius: 12px; display: flex; align-items: center; justify-content: center; }
.slider { flex: 1; display: flex; flex-direction: column; align-items: center; padding-top: 20px; }
.track-grey { width: 10px; height: 62px; background: #c4c4c4; border-radius: 5px 5px 0 0; }
.thumb { width: 42px; height: 15px; background: #3396ff; border-radius: 7px; box-shadow: 0 2px 4px rgba(0,0,0,.25); }
.track-blue { width: 10px; height: 204px; background: #3396ff; border-radius: 0 0 5px 5px; }

/* report button */
.report { flex: none; display: block; width: 986px; height: 120px; margin: 44px 47px 0; border: 0; border-radius: 30px; background: #4caf50; color: #fff; font-family: Roboto, "Noto Sans CJK KR", sans-serif; font-size: 42px; font-weight: 500; box-shadow: 0 9px 18px rgba(0,0,0,.06); }

/* bottom nav */
.nav { flex: none; height: 219px; margin-top: 42px; padding-top: 46px; border-top: 3px solid #e4e4e4; display: grid; grid-template-columns: repeat(4, 270px); }
.nav-item { display: flex; flex-direction: column; align-items: center; gap: 15px; font-size: 32px; line-height: 42px; color: #212121; }
.nav-on { color: #4caf50; font-weight: 700; }
.home-bar { flex: none; width: 284px; height: 10px; margin: 27px auto 0; border-radius: 5px; background: #666; }
```
